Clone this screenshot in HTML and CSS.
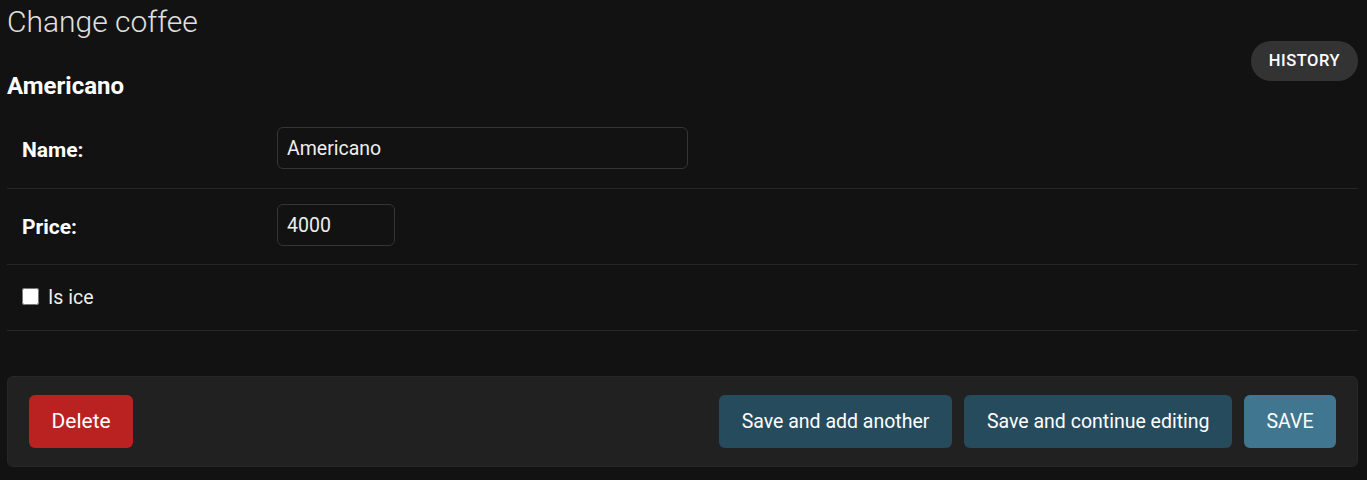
FILE: index.html
```html
<!DOCTYPE html>
<html lang="en">
<head>
<meta charset="utf-8">
<title>Change coffee</title>
<link rel="stylesheet" href="styles.css">
</head>
<body>
<div class="page">
  <h1 class="page-title">Change coffee</h1>
  <div class="title-row">
    <h2 class="object-title">Americano</h2>
    <a class="history-link" href="#">History</a>
  </div>
  <form class="change-form">
    <div class="fieldset">
      <div class="form-row row-name">
        <label class="field-label" for="id_name">Name:</label>
        <input class="text-input input-name" id="id_name" type="text" value="Americano">
      </div>
      <div class="form-row row-price">
        <label class="field-label" for="id_price">Price:</label>
        <input class="text-input input-price" id="id_price" type="text" value="4000">
      </div>
      <div class="form-row row-check">
        <input class="checkbox" id="id_is_ice" type="checkbox">
        <label class="check-label" for="id_is_ice">Is ice</label>
      </div>
    </div>
    <div class="submit-row">
      <a class="btn btn-delete" href="#">Delete</a>
      <button class="btn btn-secondary" type="button">Save and add another</button>
      <button class="btn btn-secondary" type="button">Save and continue editing</button>
      <button class="btn btn-default" type="button">SAVE</button>
    </div>
  </form>
</div>
</body>
</html>
```

FILE: styles.css
```css
html, body {
  margin: 0;
  padding: 0;
  background: #121212;
  color: #eeeeee;
  font-family: Roboto, "Liberation Sans", sans-serif;
}

.page {
  padding: 4px 9px 0 7px;
}

.page-title {
  margin: 0;
  font-size: 30px;
  line-height: 36px;
  font-weight: 300;
  color: #e0e0e0;
}

.title-row {
  display: flex;
  justify-content: space-between;
  align-items: flex-start;
  margin-top: 1px;
  margin-bottom: 12px;
}

.object-title {
  margin: 31px 0 0 0;
  font-size: 24px;
  line-height: 28px;
  font-weight: 700;
  color: #ffffff;
}

.history-link {
  display: block;
  height: 40px;
  line-height: 40px;
  padding: 0 18px;
  border-radius: 20px;
  background: #333333;
  color: #ffffff;
  font-size: 16.5px;
  font-weight: 500;
  letter-spacing: 0.5px;
  text-transform: uppercase;
  text-decoration: none;
}

.change-form {
  margin: 0;
}

.fieldset {
  margin-bottom: 45px;
}

.form-row {
  display: flex;
  align-items: flex-start;
  padding: 15px;
  border-bottom: 1px solid #272727;
}

.row-name {
  min-height: 46px;
}

.row-price {
  min-height: 45px;
}

.row-check {
  min-height: 35px;
  align-items: center;
}

.field-label {
  width: 255px;
  flex: none;
  padding-top: 8px;
  font-size: 21px;
  line-height: 31px;
  font-weight: 700;
  color: #ffffff;
}

.text-input {
  box-sizing: border-box;
  height: 42px;
  padding: 0 9px;
  border: 1px solid #353535;
  border-radius: 6px;
  background: #121212;
  color: #eeeeee;
  font-family: Roboto, "Liberation Sans", sans-serif;
  font-size: 19.5px;
  outline: none;
}

.input-name {
  width: 411px;
}

.input-price {
  width: 118px;
}

.checkbox {
  width: 17px;
  height: 17px;
  margin: 0 9px 2px 0;
  flex: none;
}

.check-label {
  font-size: 19.5px;
  line-height: 30px;
  color: #eeeeee;
}

.submit-row {
  display: flex;
  align-items: center;
  gap: 12px;
  padding: 18px 21px;
  background: #212121;
  border: 1px solid #272727;
  border-radius: 6px;
}

.btn {
  box-sizing: border-box;
  height: 53px;
  padding: 0 22.5px;
  border: none;
  border-radius: 6px;
  color: #ffffff;
  font-family: Roboto, "Liberation Sans", sans-serif;
  font-size: 19.5px;
  line-height: 53px;
  text-decoration: none;
  cursor: pointer;
}

.btn-delete {
  display: block;
  background: #ba2121;
  margin-right: auto;
  font-size: 21px;
}

.btn-secondary {
  background: #264b5d;
}

.btn-secondary:first-of-type {
  padding: 0 23px;
}

.btn-default {
  background: #417690;
}
```
